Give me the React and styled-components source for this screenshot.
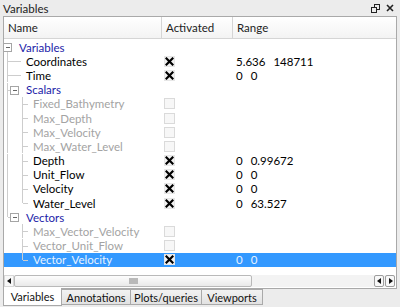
import React from 'react';
import styled, { createGlobalStyle } from 'styled-components';

const GlobalStyle = createGlobalStyle`
  html, body { margin: 0; padding: 0; }
  body {
    width: 400px;
    height: 307px;
    overflow: hidden;
    background: #ececec;
    font-family: Lato, "Noto Sans", sans-serif;
    font-size: 11.5px;
    color: #000;
  }
`;

const ROW_H = 14.2;

const tree = [
  {
    label: 'Variables',
    group: true,
    children: [
      { label: 'Coordinates', checked: true, range: ['5.636', '148711'] },
      { label: 'Time', checked: true, range: ['0', '0'] },
      {
        label: 'Scalars',
        group: true,
        children: [
          { label: 'Fixed_Bathymetry', disabled: true },
          { label: 'Max_Depth', disabled: true },
          { label: 'Max_Velocity', disabled: true },
          { label: 'Max_Water_Level', disabled: true },
          { label: 'Depth', checked: true, range: ['0', '0.99672'] },
          { label: 'Unit_Flow', checked: true, range: ['0', '0'] },
          { label: 'Velocity', checked: true, range: ['0', '0'] },
          { label: 'Water_Level', checked: true, range: ['0', '63.527'] },
        ],
      },
      {
        label: 'Vectors',
        group: true,
        children: [
          { label: 'Max_Vector_Velocity', disabled: true },
          { label: 'Vector_Unit_Flow', disabled: true },
          { label: 'Vector_Velocity', checked: true, range: ['0', '0'], selected: true },
        ],
      },
    ],
  },
];

// flatten the tree, keeping what the connector lines need
function flatten(nodes, depth = 0, trail = [], out = []) {
  nodes.forEach((n, i) => {
    const last = i === nodes.length - 1;
    out.push({ ...n, depth, last, trail });
    if (n.children) flatten(n.children, depth + 1, [...trail, last], out);
  });
  return out;
}

const rows = flatten(tree);

const textX = (d) => 17 + 7 * d;
const boxX = (d) => 3.5 + 7 * d;
const lineX = (d) => 3.5 + 15 * d;

const Guides = ({ row }) => {
  const w = textX(row.depth) - 2;
  const mid = ROW_H / 2;
  const lines = [];
  for (let a = 0; a < row.depth; a++) {
    const x = lineX(a);
    if (a === row.depth - 1) {
      lines.push(<line key={'v' + a} x1={x} y1={0} x2={x} y2={row.last ? mid : ROW_H} />);
    } else if (!row.trail[a + 1]) {
      lines.push(<line key={'v' + a} x1={x} y1={0} x2={x} y2={ROW_H} />);
    }
  }
  if (row.depth > 0) {
    const end = row.group ? boxX(row.depth) - 4.5 : textX(row.depth) - 7;
    lines.push(<line key="h" x1={lineX(row.depth - 1)} y1={mid} x2={end} y2={mid} />);
  }
  if (row.group && row.depth === 0) {
    lines.push(<line key="c" x1={boxX(0)} y1={mid + 4.5} x2={boxX(0)} y2={ROW_H} />);
  }
  const bx = boxX(row.depth);
  return (
    <svg width={w} height={ROW_H} style={{ flex: 'none' }}>
      <g stroke="#cdcdcd" strokeWidth="1" shapeRendering="crispEdges">{lines}</g>
      {row.group && (
        <g shapeRendering="crispEdges">
          <rect x={bx - 4} y={mid - 4} width="8" height="8" fill="#fff" stroke="#a5a5a5" />
          <line x1={bx - 2} y1={mid} x2={bx + 2.5} y2={mid} stroke="#666" />
        </g>
      )}
    </svg>
  );
};

const Check = ({ checked, disabled }) => (
  <CheckBox $disabled={disabled} $checked={checked}>
    {checked && (
      <svg width="9" height="9" viewBox="0 0 9 9">
        <path d="M1.5 1.5 L7.5 7.5 M7.5 1.5 L1.5 7.5" stroke="#000" strokeWidth="2.2" strokeLinecap="square" />
      </svg>
    )}
  </CheckBox>
);

export default function App() {
  return (
    <Window>
      <GlobalStyle />
      <TitleBar>
        <span>Variables</span>
        <TitleIcons>
          <svg width="9" height="9" viewBox="0 0 9 9">
            <rect x="3.5" y="0.5" width="5" height="5" fill="none" stroke="#222" />
            <rect x="0.5" y="3.5" width="5" height="5" fill="#ececec" stroke="#222" />
          </svg>
          <svg width="8" height="8" viewBox="0 0 8 8">
            <path d="M1 1 L7 7 M7 1 L1 7" stroke="#222" strokeWidth="1.6" />
          </svg>
        </TitleIcons>
      </TitleBar>

      <Panel>
        <Header>
          <HeadCell $w={158}>Name</HeadCell>
          <HeadCell $w={71}>Activated</HeadCell>
          <HeadCell $w={162} $last>Range</HeadCell>
        </Header>

        <Body>
          {rows.map((r) => (
            <Row key={r.label} $selected={r.selected}>
              <NameCell>
                <Guides row={r} />
                <Label $group={r.group} $disabled={r.disabled} $selected={r.selected}>
                  {r.label}
                </Label>
              </NameCell>
              <CheckCell>
                {!r.group && <Check checked={r.checked} disabled={r.disabled} />}
              </CheckCell>
              <RangeCell $selected={r.selected}>
                {r.range && (
                  <>
                    <RangeValue>{r.range[0]}</RangeValue>
                    <RangeValue>{r.range[1]}</RangeValue>
                  </>
                )}
              </RangeCell>
            </Row>
          ))}
        </Body>

        <HScroll>
          <ArrowBtn>
            <svg width="5" height="6" viewBox="0 0 5 6"><path d="M4 0 L4 6 L0 3 Z" fill="#111" /></svg>
          </ArrowBtn>
          <Thumb>
            <Grip />
          </Thumb>
          <Track />
          <ArrowBtn $boxed>
            <svg width="5" height="6" viewBox="0 0 5 6"><path d="M4 0 L4 6 L0 3 Z" fill="#111" /></svg>
          </ArrowBtn>
          <ArrowBtn $boxed>
            <svg width="5" height="6" viewBox="0 0 5 6"><path d="M1 0 L1 6 L5 3 Z" fill="#111" /></svg>
          </ArrowBtn>
        </HScroll>
      </Panel>

      <Tabs>
        <Tab $active>Variables</Tab>
        <Tab $w={69}>Annotations</Tab>
        <Tab $w={71}>Plots/queries</Tab>
        <Tab $w={61}>Viewports</Tab>
      </Tabs>
    </Window>
  );
}

const Window = styled.div`
  width: 400px;
  height: 307px;
  display: flex;
  flex-direction: column;
  background: #ececec;
`;

const TitleBar = styled.div`
  height: 16px;
  display: flex;
  align-items: center;
  justify-content: space-between;
  padding: 0 4px 0 3px;
  color: #222;
`;

const TitleIcons = styled.div`
  display: flex;
  align-items: center;
  gap: 6px;
  padding-right: 2px;
`;

const Panel = styled.div`
  margin-left: 3px;
  width: 392px;
  height: 271px;
  background: #fff;
  border: 1px solid #a9a9a9;
  display: flex;
  flex-direction: column;
`;

const Header = styled.div`
  height: 21px;
  display: flex;
  border-bottom: 1px solid #d5d5d5;
  background: linear-gradient(#ffffff, #f3f3f3);
`;

const HeadCell = styled.div`
  width: ${(p) => p.$w}px;
  flex: none;
  display: flex;
  align-items: center;
  padding-left: 4px;
  box-sizing: border-box;
  color: #222;
  border-right: ${(p) => (p.$last ? 'none' : '1px solid #d5d5d5')};
`;

const Body = styled.div`
  flex: 1;
  padding-top: 1px;
`;

const Row = styled.div`
  height: ${ROW_H}px;
  display: flex;
  align-items: center;
  background: ${(p) => (p.$selected ? '#3399ff' : 'transparent')};
`;

const NameCell = styled.div`
  width: 158px;
  flex: none;
  display: flex;
  align-items: center;
  white-space: nowrap;
`;

const Label = styled.span`
  color: ${(p) =>
    p.$selected ? '#e8f3ff' : p.$group ? '#1c1ca8' : p.$disabled ? '#a3a3a3' : '#000'};
`;

const CheckCell = styled.div`
  width: 71px;
  flex: none;
  display: flex;
  align-items: center;
  padding-left: 2px;
  box-sizing: border-box;
`;

const CheckBox = styled.div`
  width: 11px;
  height: 11px;
  box-sizing: border-box;
  display: flex;
  align-items: center;
  justify-content: center;
  border: 1px solid ${(p) => (p.$disabled ? '#dadada' : p.$checked ? '#e6e6e6' : 'transparent')};
  background: ${(p) => (p.$disabled ? '#f7f7f7' : p.$checked ? '#f2f2f2' : 'transparent')};
`;

const RangeCell = styled.div`
  flex: 1;
  display: flex;
  gap: 8px;
  padding-left: 3px;
  color: ${(p) => (p.$selected ? '#e8f3ff' : '#000')};
`;

const RangeValue = styled.span``;

const HScroll = styled.div`
  height: 12px;
  margin: 0 1px 1px 0;
  display: flex;
  align-items: stretch;
  background: #f3f3f3;
`;

const ArrowBtn = styled.div`
  width: 10px;
  flex: none;
  display: flex;
  align-items: center;
  justify-content: center;
  box-sizing: border-box;
  border: 1px solid ${(p) => (p.$boxed ? '#9d9d9d' : '#d8d8d8')};
  border-radius: ${(p) => (p.$boxed ? '2px' : '0')};
  background: #f8f8f8;
  margin-left: ${(p) => (p.$boxed ? '1px' : '0')};
`;

const Thumb = styled.div`
  width: 238px;
  flex: none;
  box-sizing: border-box;
  border: 1px solid #b9b9b9;
  border-radius: 2px;
  background: linear-gradient(#fdfdfd, #e9e9e9);
  display: flex;
  align-items: center;
  justify-content: center;
`;

const Grip = styled.div`
  width: 9px;
  height: 6px;
  background-image: radial-gradient(circle, #b5b5b5 0.7px, transparent 0.8px);
  background-size: 2px 2px;
`;

const Track = styled.div`
  flex: 1;
`;

const Tabs = styled.div`
  display: flex;
  align-items: flex-start;
  padding-left: 3px;
  margin-top: -1px;
`;

const Tab = styled.div`
  width: ${(p) => (p.$active ? 59 : p.$w)}px;
  height: ${(p) => (p.$active ? 18 : 16)}px;
  box-sizing: border-box;
  display: flex;
  align-items: center;
  justify-content: center;
  color: #111;
  font-size: 11px;
  background: ${(p) => (p.$active ? '#fff' : 'linear-gradient(#f2f2f2, #e2e2e2)')};
  border: 1px solid #a9a9a9;
  border-top: ${(p) => (p.$active ? 'none' : '1px solid #a9a9a9')};
  border-left: ${(p) => (p.$active ? '1px solid #a9a9a9' : 'none')};
  margin-top: ${(p) => (p.$active ? 0 : 1)}px;
`;
